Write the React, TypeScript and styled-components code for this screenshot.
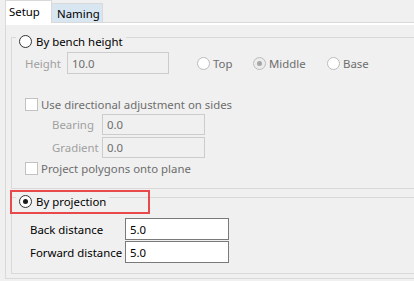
import styled, { createGlobalStyle } from 'styled-components';

const GlobalStyle = createGlobalStyle`
  html, body {
    margin: 0;
    padding: 0;
    background: #f0f0f0;
    overflow: hidden;
  }
  body {
    font-family: "Noto Sans", "Open Sans", sans-serif;
    font-size: 11.4px;
    color: #000;
  }
`;

type MarkProps = { $checked?: boolean; $disabled?: boolean };

const Window = styled.div`
  width: 414px;
  height: 281px;
  overflow: hidden;
`;

const TabBar = styled.div`
  display: flex;
  align-items: flex-end;
  height: 22px;
  padding-left: 5px;
`;

const Tab = styled.div<{ $active?: boolean; $w: number }>`
  box-sizing: border-box;
  width: ${(p) => p.$w}px;
  height: ${(p) => (p.$active ? 23 : 19)}px;
  margin-bottom: ${(p) => (p.$active ? -1 : 0)}px;
  margin-left: ${(p) => (p.$active ? 0 : -1)}px;
  padding-left: ${(p) => (p.$active ? 3 : 5)}px;
  padding-bottom: ${(p) => (p.$active ? 2 : 0)}px;
  display: flex;
  align-items: center;
  background: ${(p) => (p.$active ? '#ffffff' : '#d8e6f2')};
  border: 1px solid #d9d9d9;
  border-bottom: none;
  position: relative;
  z-index: ${(p) => (p.$active ? 1 : 0)};
`;

const Panel = styled.div`
  box-sizing: border-box;
  margin-left: 5px;
  margin-right: -20px;
  height: 257px;
  padding: 6px 0 4px 5px;
  border: 1px solid #d9d9d9;
  box-shadow: inset 0 2px 0 #ffffff;
  display: flex;
  flex-direction: column;
`;

const Group = styled.fieldset<{ $pb: number }>`
  margin: 0;
  padding: 0 0 ${(p) => p.$pb}px 0;
  border: 1px solid #d9d9d9;
  min-width: 0;
`;

const Legend = styled.legend`
  position: relative;
  top: 4px;
  margin-left: 4px;
  padding: 0 3px;
  height: 16px;
  display: flex;
  align-items: center;
  gap: 4px;
`;

const Highlight = styled.span`
  position: absolute;
  left: -6px;
  top: -3px;
  width: 140px;
  height: 24px;
  box-sizing: border-box;
  border: 2px solid #e8494a;
  pointer-events: none;
`;

const Row = styled.div<{ $pl: number; $mt: number; $h: number }>`
  display: flex;
  align-items: center;
  padding-left: ${(p) => p.$pl}px;
  margin-top: ${(p) => p.$mt}px;
  height: ${(p) => p.$h}px;
`;

const Label = styled.span<{ $w: number; $disabled?: boolean }>`
  width: ${(p) => p.$w}px;
  flex: none;
  color: ${(p) => (p.$disabled ? '#a0a0a0' : '#000')};
  white-space: nowrap;
`;

const Field = styled.div<{ $w: number; $disabled?: boolean }>`
  box-sizing: border-box;
  width: ${(p) => p.$w}px;
  height: 100%;
  display: flex;
  align-items: center;
  padding-left: 4px;
  border: 1px solid ${(p) => (p.$disabled ? '#cccccc' : '#7a7a7a')};
  background: ${(p) => (p.$disabled ? '#f0f0f0' : '#ffffff')};
  color: ${(p) => (p.$disabled ? '#6d6d6d' : '#000')};
`;

const Option = styled.span<{ $w?: number; $disabled?: boolean; $ml?: number }>`
  display: inline-flex;
  align-items: center;
  gap: 3px;
  width: ${(p) => (p.$w ? `${p.$w}px` : 'auto')};
  margin-left: ${(p) => p.$ml ?? 0}px;
  flex: none;
  white-space: nowrap;
  color: ${(p) => (p.$disabled ? '#6d6d6d' : '#000')};
`;

const RadioMark = styled.span<MarkProps>`
  box-sizing: border-box;
  width: 13px;
  height: 13px;
  flex: none;
  border-radius: 50%;
  border: 1px solid ${(p) => (p.$disabled ? '#bcbcbc' : '#333333')};
  background: ${(p) => (p.$disabled && p.$checked ? '#ececec' : '#ffffff')};
  display: inline-flex;
  align-items: center;
  justify-content: center;

  &::after {
    content: '';
    display: ${(p) => (p.$checked ? 'block' : 'none')};
    width: 5px;
    height: 5px;
    border-radius: 50%;
    background: ${(p) => (p.$disabled ? '#a6a6a6' : '#1a1a1a')};
  }
`;

const CheckMark = styled.span<MarkProps>`
  box-sizing: border-box;
  width: 13px;
  height: 13px;
  flex: none;
  border: 1px solid ${(p) => (p.$disabled ? '#c2c2c2' : '#333333')};
  background: #ffffff;
`;

export default function App() {
  return (
    <Window>
      <GlobalStyle />
      <TabBar>
        <Tab $active $w={47}>Setup</Tab>
        <Tab $w={52}>Naming</Tab>
      </TabBar>
      <Panel>
        <Group $pb={12}>
          <Legend>
            <RadioMark />
            By bench height
          </Legend>
          <Row $pl={13} $mt={7} $h={22}>
            <Label $w={42} $disabled>Height</Label>
            <Field $w={102} $disabled>10.0</Field>
            <Option $ml={28} $w={56} $disabled>
              <RadioMark $disabled />
              Top
            </Option>
            <Option $w={74} $disabled>
              <RadioMark $disabled $checked />
              Middle
            </Option>
            <Option $disabled>
              <RadioMark $disabled />
              Base
            </Option>
          </Row>
          <Row $pl={13} $mt={22} $h={16}>
            <Option $disabled>
              <CheckMark $disabled />
              Use directional adjustment on sides
            </Option>
          </Row>
          <Row $pl={40} $mt={2} $h={21}>
            <Label $w={50} $disabled>Bearing</Label>
            <Field $w={103} $disabled>0.0</Field>
          </Row>
          <Row $pl={40} $mt={2} $h={21}>
            <Label $w={50} $disabled>Gradient</Label>
            <Field $w={103} $disabled>0.0</Field>
          </Row>
          <Row $pl={13} $mt={2} $h={16}>
            <Option $disabled>
              <CheckMark $disabled />
              Project polygons onto plane
            </Option>
          </Row>
        </Group>
        <Group $pb={10}>
          <Legend>
            <Highlight />
            <RadioMark $checked />
            By projection
          </Legend>
          <Row $pl={18} $mt={13} $h={22}>
            <Label $w={95}>Back distance</Label>
            <Field $w={104}>5.0</Field>
          </Row>
          <Row $pl={18} $mt={1} $h={22}>
            <Label $w={95}>Forward distance</Label>
            <Field $w={104}>5.0</Field>
          </Row>
        </Group>
      </Panel>
    </Window>
  );
}
